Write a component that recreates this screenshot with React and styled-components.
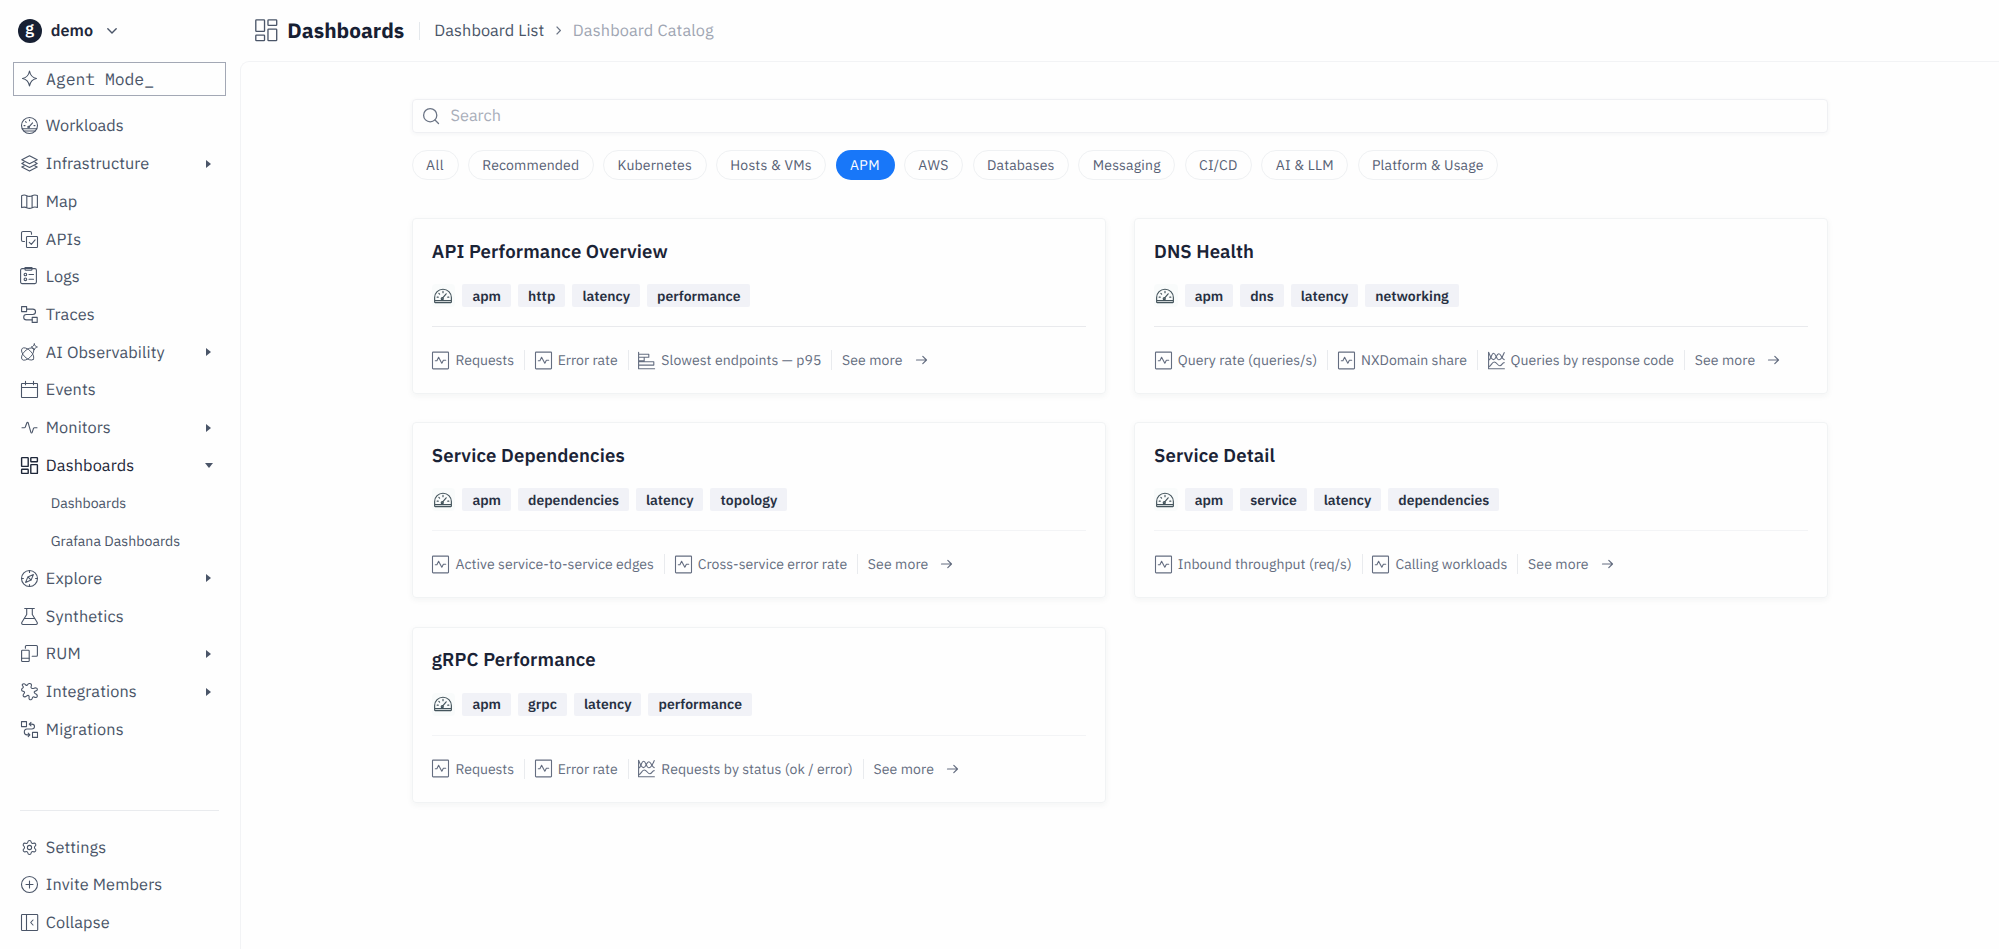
import { useLayoutEffect, useRef } from "react";
import styled, { createGlobalStyle } from "styled-components";
import { Settings } from "lucide-react";

const GlobalStyle = createGlobalStyle`
  * {
    box-sizing: border-box;
  }

  body {
    margin: 0;
    background: #fefefe;
    color: #4a5568;
    font-family: "IBM Plex Sans", "Noto Sans", sans-serif;
    font-size: 16px;
    text-rendering: geometricPrecision;
    overflow: hidden;
  }
`;

const Page = styled.div`
  display: flex;
  height: 949px;
`;

const Sidebar = styled.aside`
  display: flex;
  flex-direction: column;
  width: 240px;
  flex-shrink: 0;
`;

const Account = styled.div`
  display: flex;
  align-items: center;
  height: 61px;
  padding-left: 17.5px;
`;

const Avatar = styled.div`
  display: flex;
  align-items: center;
  justify-content: center;
  width: 24px;
  height: 24px;
  border-radius: 50%;
  background: #172033;
  color: #ffffff;
  font: 600 16px/20px "IBM Plex Sans", "Open Sans", sans-serif;
  padding-bottom: 3px;
`;

const AccountName = styled.div`
  margin: 0 13.5px 0 9.2px;
  font-size: 16.2px;
  font-weight: 600;
  color: #1e2739;
`;

const AgentMode = styled.div`
  display: flex;
  align-items: center;
  gap: 8px;
  width: 213px;
  height: 34px;
  margin: 1px 0 11px 13px;
  padding: 0 0 1px 7px;
  border: 1px solid #a3a8b5;
  font-family: "IBM Plex Mono", "Liberation Mono", monospace;
  font-size: 16.5px;
`;

const NavList = styled.nav`
  display: flex;
  flex-direction: column;
`;

const NavItem = styled.div`
  display: flex;
  align-items: center;
  gap: 8.3px;
  height: 37.72px;
  padding: 0 28px 0 ${(props) => (props.$sub ? "50.7px" : "20.5px")};
  font-size: ${(props) => (props.$sub ? "14.1px" : "16.3px")};
  color: ${(props) => (props.$active ? "#1e2739" : "#4a5568")};
`;

const Caret = styled.span`
  width: 0;
  height: 0;
  margin-left: auto;
  border-style: solid;
  border-width: ${(props) => (props.$open ? "5px 4px 0 4px" : "4px 0 4px 5px")};
  border-color: ${(props) =>
    props.$open
      ? "#4a5568 transparent transparent transparent"
      : "transparent transparent transparent #4a5568"};
  margin-right: ${(props) => (props.$open ? "-1px" : "1px")};
`;

const NavFooter = styled.div`
  margin-top: auto;
  padding-bottom: 7.5px;
`;

const NavDivider = styled.div`
  height: 1px;
  margin: 0 21.5px 17px 20px;
  background: #e9ebee;
`;

const Main = styled.main`
  flex: 1;
  display: flex;
  flex-direction: column;
`;

const Header = styled.header`
  display: flex;
  align-items: center;
  height: 61px;
  padding-left: 14.5px;
`;

const PageTitle = styled.h1`
  margin: 0 14.5px 0 10.3px;
  font-size: 20.8px;
  font-weight: 700;
  line-height: 28px;
  color: #172033;
`;

const HeaderDivider = styled.div`
  width: 1px;
  height: 18px;
  margin-right: 14.5px;
  background: #e4e8ec;
`;

const Crumb = styled.div`
  font-size: 16.3px;
  color: ${(props) => (props.$muted ? "#a0a6b3" : "#4a5568")};
`;

const CrumbArrow = styled.svg`
  margin: 0 12px 0 11.5px;
`;

const Content = styled.div`
  flex: 1;
  padding: 37px 171px 0 170.5px;
  border-top: 1px solid #f2f3f5;
  border-left: 1px solid #f2f3f5;
  border-top-left-radius: 9px;
`;

const SearchBox = styled.div`
  display: flex;
  align-items: center;
  gap: 12px;
  height: 34px;
  padding: 0 0 1px 10px;
  border: 1px solid #eff0f3;
  border-radius: 4px;
  box-shadow: 0 1px 4px rgba(30, 50, 80, 0.05);
  font-size: 16.3px;
  color: #a9aeba;
`;

const Pills = styled.div`
  display: flex;
  gap: 9.25px;
  margin-top: 17px;
`;

const Pill = styled.div`
  display: flex;
  align-items: center;
  justify-content: center;
  height: 30px;
  padding: 0 ${(props) => (props.$active ? "14.5px" : "13.5px")};
  border: ${(props) => (props.$active ? "none" : "1px solid #eff1f3")};
  border-radius: 15px;
  background: ${(props) => (props.$active ? "#1877f9" : "transparent")};
  color: ${(props) => (props.$active ? "#ffffff" : "#566074")};
  font-size: 14px;
`;

const Cards = styled.div`
  display: grid;
  grid-template-columns: 1fr 1fr;
  gap: 28.3px 28px;
  margin-top: 38px;
`;

const Card = styled.article`
  height: 176px;
  padding: 20.7px 19px 0 19.3px;
  border: 1px solid #f1f3f4;
  border-radius: 4px;
  box-shadow: 0 2px 6px rgba(30, 60, 60, 0.05);
`;

const CardTitle = styled.h2`
  display: flex;
  margin: 0;
  font-size: 18.6px;
  font-weight: 600;
  line-height: 24px;
  color: #1a2336;
`;

const Tags = styled.div`
  display: flex;
  gap: 7px;
  margin-top: 20.5px;
`;

const Tag = styled.div`
  display: flex;
  align-items: center;
  height: 23px;
  padding: 0 10px;
  border-radius: 2px;
  background: #f1f2f7;
  color: #273042;
  font-size: 14px;
  font-weight: 600;
`;

const TypeBadge = styled.div`
  display: flex;
  align-items: center;
  width: 23.7px;
  height: 23px;
  padding-left: 2px;
  border-radius: 4px;
  background: #f9fbfb;
  color: #44545c;
`;

const CardRule = styled.div`
  height: 1px;
  margin: 19px 0 23px;
  background: ${(props) => (props.$strong ? "#e9eaed" : "#f3f4f6")};
`;

const Metrics = styled.div`
  display: flex;
  align-items: center;
  height: 20px;
  padding-left: 0.7px;
  font-size: 14px;
  color: #646d80;
`;

const Metric = styled.div`
  display: flex;
  align-items: center;
  gap: 6px;
  padding-right: 10px;
  margin-right: 9.700px;
  border-right: 1px solid #e9ebee;
  height: 20px;
`;

const SeeMore = styled.div`
  display: flex;
  align-items: center;
  gap: 13px;
`;

const Label = styled.span`
  display: block;
  white-space: nowrap;
`;

// Spreads the tracking so a label keeps its width whichever font is loaded.
const FitLabel = ({ text, width }) => {
  const ref = useRef(null);

  useLayoutEffect(() => {
    const el = ref.current;
    el.style.letterSpacing = "0px";
    el.style.width = "max-content";
    const natural = el.getBoundingClientRect().width;
    el.style.letterSpacing = `${(width - natural) / text.length}px`;
    el.style.width = `${width}px`;
  }, [text, width]);

  return <Label ref={ref}>{text}</Label>;
};

const IconSvg = styled.svg`
  display: block;
  flex-shrink: 0;
  overflow: visible;
  fill: none;
  stroke: currentColor;
  stroke-width: ${(props) => props.$stroke || 1.1};
  stroke-linecap: round;
  stroke-linejoin: round;
`;

const Icon = ({ name, size = 17, stroke }) => (
  <IconSvg width={size} height={size} viewBox="0 0 17 17" $stroke={stroke}>
    {icons[name]}
  </IconSvg>
);

const icons = {
  sparkle: (
    <path d="M8.5 1c.8 4.4 2.6 6.7 7 7.5-4.4.8-6.2 3.1-7 7.5-.8-4.400-2.600-6.700-7-7.500 4.400-.8 6.200-3.100 7-7.500z" />
  ),
  workloads: (
    <>
      <circle cx="8.5" cy="8.5" r="8" />
      <path d="M1.300 11.700h14.400M3 14h11M8 9.800l3.600-4M8.500 2.800v1M4.600 4.700l.6.600M3 8.600h1M13 8.600h1" />
      <circle cx="7.600" cy="10" r=".8" />
    </>
  ),
  infrastructure: (
    <path d="M8.500.8l7.700 4-7.700 4-7.700-4zM3 7.300L.8 8.500l7.700 4 7.700-4L14 7.300M3 10.900L.8 12.100l7.700 4 7.700-4-2.200-1.200" />
  ),
  map: (
    <path d="M.6 2.700c2-1 3.400-.9 5.200 0 1.900.9 3.400.9 5.300 0 1.800-.9 3.300-.9 5.300-.2v12c-2-.8-3.500-.7-5.300.2-1.900.900-3.400.900-5.300 0-1.800-.9-3.200-.8-5.200-.1zM5.800 2.700v12M11.100 2.700v12" />
  ),
  apis: (
    <>
      <path d="M3.500 10.500H2A1.500 1.500 0 0 1 .5 9V2A1.500 1.500 0 0 1 2 .5h7A1.500 1.500 0 0 1 10.500 2v1.200" />
      <rect x="5.500" y="5.500" width="11" height="11" rx=".8" />
      <path d="M8.300 11.400l2 2 3.800-4.600" />
    </>
  ),
  logs: (
    <>
      <rect x="-.4" y=".6" width="15.800" height="15" rx="1.500" />
      <path d="M4-.4h7v1.600a1 1 0 0 1-1 1H5a1 1 0 0 1-1-1zM8 6.500h4.500M8 11.300h4.500" />
      <circle cx="4.400" cy="6.500" r="1.300" />
      <circle cx="4.400" cy="11.300" r="1.300" />
    </>
  ),
  traces: (
    <>
      <rect x=".6" y=".6" width="5" height="5" />
      <rect x="11.200" y="11.400" width="5" height="5" />
      <path d="M5.600 3.100h6.200a2.700 2.700 0 0 1 0 5.400H5.400a2.700 2.700 0 0 0 0 5.400h5.800" />
    </>
  ),
  ai: (
    <>
      <ellipse cx="6.700" cy="10" rx="7.800" ry="4" transform="rotate(45 6.700 10)" />
      <ellipse cx="6.700" cy="10" rx="7.800" ry="4" transform="rotate(-45 6.700 10)" />
      <path
        fill="#fefefe"
        d="M13.300-.1c.4 1.900 1.200 2.700 3.100 3.100-1.900.4-2.700 1.200-3.100 3.100-.4-1.900-1.200-2.700-3.100-3.100 1.900-.4 2.700-1.200 3.100-3.100z"
      />
    </>
  ),
  events: (
    <>
      <rect x=".5" y="2.500" width="16" height="14" rx=".5" />
      <path d="M.5 6.500h16M4.500.4v3.400M12.500.4v3.400" />
    </>
  ),
  monitors: (
    <path d="M1 8.700h2.300c.6 0 .9-.3 1.100-.9l1.500-4c.3-.8 1-.8 1.300 0l2.700 9.500c.3.900 1 .9 1.300.1l1.300-4c.2-.5.500-.7 1-.7H16" />
  ),
  dashboards: (
    <>
      <rect x=".6" y=".6" width="6.600" height="8.800" rx=".5" />
      <rect x="9.800" y=".6" width="6.600" height="4.200" rx=".5" />
      <rect x=".6" y="12.200" width="6.600" height="4.200" rx=".5" />
      <rect x="9.800" y="7.600" width="6.600" height="8.800" rx=".5" />
    </>
  ),
  explore: (
    <>
      <circle cx="8.500" cy="8.500" r="8" />
      <path d="M12.400 4.600l-2.300 5.500-5.500 2.300 2.300-5.500zM6.900 6.900l3.200 3.200M8.500.5v1.900M8.500 14.600v1.900M.5 8.500h1.900M14.600 8.500h1.900" />
    </>
  ),
  synthetics: (
    <path d="M3.700.5h9.600M5.700.5v6L.9 14.300c-.6 1.200-.1 2.200 1.100 2.200h13c1.200 0 1.700-1 1.100-2.200L11.300 6.500v-6M3.300 10.500h10.400" />
  ),
  rum: (
    <>
      <rect x=".6" y="5.300" width="7.600" height="11.200" rx=".8" />
      <path d="M.6 13.300h7.600M4.400 3.200V1.500a1 1 0 0 1 1-1h10a1 1 0 0 1 1 1v8.700a1 1 0 0 1-1 1h-4.200" />
    </>
  ),
  integrations: (
    <path d="M1.300 1.500c1.200-1.200 2.500-.8 3.300.4.600.9 1.500.5 2-.3.700-1.200 2.700-1.600 3.600-.5 1 1.300-.4 2.200-.2 3.200.3 1.500 2 1.400 2.900 1 1.300-.7 3.300-.6 3.500.9.200 1.600-1.700 1.800-2.500 2.100-1.200.6-.7 1.800.2 2.200 1.300.5 2.600 1.300 2.100 3-.5 1.500-2.200 1-3.200.5-1-.4-1.600.3-1.700 1.200-.1 1.200-1.500 2-2.700 1.300-1.200-.8-.3-2-.5-3.100-.3-1.300-1.500-1.200-2.300-.5-1 .9-2.600 1.500-3.500.300-.9-1.300.5-2.300 1-3 .7-1-.2-1.800-1.200-2C.6 8 .2 6.700 1 5.700c.8-.8 1.600-.9 1.300-1.900-.2-.7-1.500-1.300-1-2.300z" />
  ),
  migrations: (
    <>
      <rect x=".5" y=".6" width="5" height="5" />
      <rect x="11.500" y="11.400" width="5" height="5" />
      <path d="M8.200 3.100h2.600c1.700 0 2.700 1 2.700 2.500S12.500 8 10.800 8H6C4.300 8 3.300 9.300 3.300 11s1 2.900 2.700 2.900h2.800M10 1.400L8.200 3.100 10 4.800M7.200 12.200l1.700 1.700-1.700 1.700" />
    </>
  ),
  invite: (
    <>
      <circle cx="8.500" cy="8.500" r="8" />
      <path d="M8.500 5v7M5 8.500h7" />
    </>
  ),
  collapse: (
    <>
      <rect x=".5" y=".5" width="16.200" height="16" rx=".8" />
      <path d="M5.500.5v16M12 6L9.700 8.500 12 11" />
    </>
  ),
  gauge: (
    <>
      <path d="M.6 14.200V10a7.900 7.900 0 0 1 15.800 0v4.200c0 .3-.2.500-.5.500H1.100c-.3 0-.5-.2-.5-.500zM.8 12.900h15.400M8 10.600l3.500-4.200M8.500 4.200v1.200M4.600 6l.7.700M3 9.600h1M13 9.600h1" />
      <circle cx="7.800" cy="11" r="1" />
    </>
  ),
  wave: (
    <>
      <rect x=".5" y=".1" width="16" height="16.800" rx=".6" />
      <path d="M3.300 8.800h1.600l1.700-3.600 3.200 6 1.600-2.900h2.300" />
    </>
  ),
  bars: (
    <path d="M.6.200v16.600h16M.6 2.200h10.200v3H.6M.6 5.200h5.600v3.500H.6M.6 9.700h15.200v3.400H.6" />
  ),
  lines: (
    <>
      <path d="M.6.200v16.600h15.800M.8 8C3 8 3.200 1.200 5.600 1.200S8.200 7.800 10.800 7.800 14.800 4 16.200.6" />
      <path d="M.8.8C2.200 4 3.200 7.600 5.600 7.600S8.400 1.800 10.800 1.800 13.600 7 16.200 7.600" />
      <path d="M.8 14.600c2.400 0 2.800-4.600 5.400-4.600s3.400 3.800 5.600 3.800 2.400-3.200 4.400-3.200" />
    </>
  ),
};

const navItems = [
  { icon: "workloads", text: "Workloads", width: 78 },
  { icon: "infrastructure", text: "Infrastructure", width: 103.5, caret: true },
  { icon: "map", text: "Map", width: 31.5 },
  { icon: "apis", text: "APIs", width: 35.5 },
  { icon: "logs", text: "Logs", width: 34 },
  { icon: "traces", text: "Traces", width: 49 },
  { icon: "ai", text: "AI Observability", width: 119, caret: true },
  { icon: "events", text: "Events", width: 50 },
  { icon: "monitors", text: "Monitors", width: 65, caret: true },
  { icon: "dashboards", text: "Dashboards", width: 88.5, caret: true, open: true, active: true },
  { text: "Dashboards", width: 75.5, sub: true },
  { text: "Grafana Dashboards", width: 129.5, sub: true },
  { icon: "explore", text: "Explore", width: 56.5, caret: true },
  { icon: "synthetics", text: "Synthetics", width: 78 },
  { icon: "rum", text: "RUM", width: 35, caret: true },
  { icon: "integrations", text: "Integrations", width: 91, caret: true },
  { icon: "migrations", text: "Migrations", width: 78 },
];

const footerItems = [
  { icon: "settings", text: "Settings", width: 60.5 },
  { icon: "invite", text: "Invite Members", width: 116.5 },
  { icon: "collapse", text: "Collapse", width: 64 },
];

const pills = [
  { text: "All", width: 18 },
  { text: "Recommended", width: 97 },
  { text: "Kubernetes", width: 74.5 },
  { text: "Hosts & VMs", width: 81.5 },
  { text: "APM", width: 30, active: true },
  { text: "AWS", width: 30.5 },
  { text: "Databases", width: 67.5 },
  { text: "Messaging", width: 68 },
  { text: "CI/CD", width: 38.5 },
  { text: "AI & LLM", width: 58 },
  { text: "Platform & Usage", width: 111.5 },
];

const apm = { text: "apm", width: 28.5 };
const latency = { text: "latency", width: 47.5 };
const performance = { text: "performance", width: 83.5 };
const dependencies = { text: "dependencies", width: 91 };

const requests = { icon: "wave", text: "Requests", width: 58.5 };
const errorRate = { icon: "wave", text: "Error rate", width: 60 };

const cards = [
  {
    title: "API Performance Overview",
    width: 236,
    strong: true,
    tags: [apm, { text: "http", width: 27.5 }, latency, performance],
    metrics: [
      requests,
      errorRate,
      { icon: "bars", text: "Slowest endpoints — p95", width: 160 },
    ],
  },
  {
    title: "DNS Health",
    width: 100,
    strong: true,
    tags: [apm, { text: "dns", width: 23.5 }, latency, { text: "networking", width: 73.5 }],
    metrics: [
      { icon: "wave", text: "Query rate (queries/s)", width: 139.5 },
      { icon: "wave", text: "NXDomain share", width: 106 },
      { icon: "lines", text: "Queries by response code", width: 163.5 },
    ],
  },
  {
    title: "Service Dependencies",
    width: 193,
    tags: [apm, dependencies, latency, { text: "topology", width: 57 }],
    metrics: [
      { icon: "wave", text: "Active service-to-service edges", width: 198.5 },
      { icon: "wave", text: "Cross-service error rate", width: 149.5 },
    ],
  },
  {
    title: "Service Detail",
    width: 121,
    tags: [apm, { text: "service", width: 46.5 }, latency, dependencies],
    metrics: [
      { icon: "wave", text: "Inbound throughput (req/s)", width: 174 },
      { icon: "wave", text: "Calling workloads", width: 112 },
    ],
  },
  {
    title: "gRPC Performance",
    width: 164,
    tags: [apm, { text: "grpc", width: 29 }, latency, performance],
    metrics: [
      requests,
      errorRate,
      { icon: "lines", text: "Requests by status (ok / error)", width: 191.5 },
    ],
  },
];

const NavRow = ({ icon, text, width, sub, active, caret, open }) => (
  <NavItem $sub={sub} $active={active}>
    {icon === "settings" && <Settings size={17} strokeWidth={1.5} />}
    {icon && icon !== "settings" && (
      <Icon name={icon} stroke={active ? 1.4 : icon === "ai" ? 0.9 : 1.1} />
    )}
    <FitLabel text={text} width={width} />
    {caret && <Caret $open={open} />}
  </NavItem>
);

const DashboardCard = ({ title, width, tags, metrics, strong }) => (
  <Card>
    <CardTitle>
      <FitLabel text={title} width={width} />
    </CardTitle>
    <Tags>
      <TypeBadge>
        <Icon name="gauge" size={18} />
      </TypeBadge>
      {tags.map((tag) => (
        <Tag key={tag.text}>
          <FitLabel {...tag} />
        </Tag>
      ))}
    </Tags>
    <CardRule $strong={strong} />
    <Metrics>
      {metrics.map(({ icon, text, width: textWidth }) => (
        <Metric key={text}>
          <Icon name={icon} />
          <FitLabel text={text} width={textWidth} />
        </Metric>
      ))}
      <SeeMore>
        <FitLabel text="See more" width={60.5} />
        <IconSvg width="11" height="10" viewBox="0 0 11 10" $stroke={1.2}>
          <path d="M.5 5h10M6.800 1.300L10.500 5 6.800 8.700" />
        </IconSvg>
      </SeeMore>
    </Metrics>
  </Card>
);

export default function App() {
  return (
    <Page>
      <GlobalStyle />
      <Sidebar>
        <Account>
          <Avatar>g</Avatar>
          <AccountName>
            <FitLabel text="demo" width={42.5} />
          </AccountName>
          <IconSvg width="10" height="6" viewBox="0 0 10 6" $stroke={1.4}>
            <path d="M.8.8L5 5 9.200.8" />
          </IconSvg>
        </Account>
        <AgentMode>
          <Icon name="sparkle" />
          <FitLabel text="Agent Mode_" width={108} />
        </AgentMode>
        <NavList>
          {navItems.map((item, i) => (
            <NavRow key={i} {...item} />
          ))}
        </NavList>
        <NavFooter>
          <NavDivider />
          {footerItems.map((item) => (
            <NavRow key={item.text} {...item} />
          ))}
        </NavFooter>
      </Sidebar>
      <Main>
        <Header>
          <Icon name="dashboards" size={22.5} stroke={1} />
          <PageTitle>
            <FitLabel text="Dashboards" width={117} />
          </PageTitle>
          <HeaderDivider />
          <Crumb>
            <FitLabel text="Dashboard List" width={110} />
          </Crumb>
          <CrumbArrow width="5" height="9" viewBox="0 0 5 9" fill="none" stroke="#6b7485" strokeWidth="1.3">
            <path d="M.6.6l3.800 3.900L.6 8.400" />
          </CrumbArrow>
          <Crumb $muted>
            <FitLabel text="Dashboard Catalog" width={141} />
          </Crumb>
        </Header>
        <Content>
          <SearchBox>
            <IconSvg width="16" height="16" viewBox="0 0 16 16" $stroke={1.3} color="#6b7485">
              <circle cx="7.200" cy="7.200" r="6.600" />
              <path d="M12 12l3.500 3.500" />
            </IconSvg>
            <FitLabel text="Search" width={50.5} />
          </SearchBox>
          <Pills>
            {pills.map(({ text, width, active }) => (
              <Pill key={text} $active={active}>
                <FitLabel text={text} width={width} />
              </Pill>
            ))}
          </Pills>
          <Cards>
            {cards.map((card) => (
              <DashboardCard key={card.title} {...card} />
            ))}
          </Cards>
        </Content>
      </Main>
    </Page>
  );
}
